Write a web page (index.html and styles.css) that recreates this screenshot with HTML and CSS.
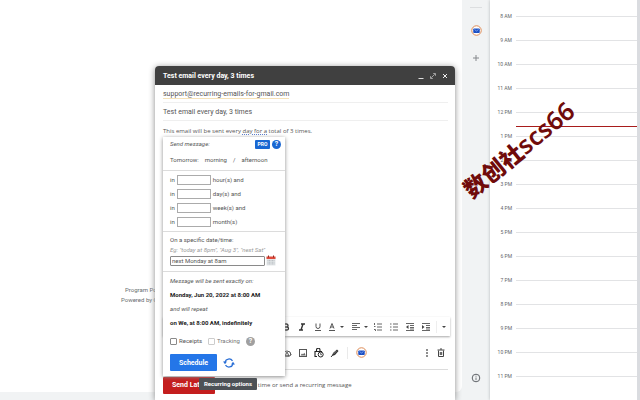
FILE: index.html
```html
<!DOCTYPE html>
<html lang="en">
<head>
<meta charset="utf-8">
<title>Test email every day, 3 times</title>
<link rel="stylesheet" href="styles.css">
</head>
<body>
<div class="app">
  <main class="mail">
    <div class="mail-panel">
      <p class="mail-footer"><a href="#">Program Policies</a><span>Powered by Google</span></p>
    </div>
  </main>

  <nav class="rail" aria-label="Side panel">
    <span class="rail-line"></span>
    <button class="icon-btn rail-mail" aria-label="Recurring emails">
      <svg width="11" height="11" viewBox="0 0 22 22"><circle cx="11" cy="11" r="9.5" fill="#fff" stroke="#dd8a55" stroke-width="2"/><rect x="4.500" y="7" width="13" height="9" rx="1.500" fill="#1c50c4"/><path d="M7 9l4 3 4-3" fill="none" stroke="#8fb1f5" stroke-width="1.500"/></svg>
    </button>
    <button class="icon-btn rail-add" aria-label="Get add-ons">
      <svg width="8" height="8" viewBox="0 0 8 8"><path d="M4 1v6M1 4h6" stroke="#85888c" stroke-width="1"/></svg>
    </button>
    <button class="icon-btn rail-info" aria-label="Information">
      <svg width="10" height="10" viewBox="0 0 10 10"><circle cx="5" cy="5" r="3.800" fill="none" stroke="#5f6368" stroke-width="1"/><path d="M5 4.500v2.700M5 2.700v1" stroke="#777a7e" stroke-width="1"/></svg>
    </button>
  </nav>

  <aside class="calendar" aria-label="Calendar">
    <ol class="hours">
      <li>8 AM</li><li>9 AM</li><li>10 AM</li><li>11 AM</li><li>12 PM</li><li>1 PM</li><li>2 PM</li><li>3 PM</li>
      <li>4 PM</li><li>5 PM</li><li>6 PM</li><li>7 PM</li><li>8 PM</li><li>9 PM</li><li>10 PM</li><li>11 PM</li>
    </ol>
    <span class="now"></span>
  </aside>

  <section class="compose" aria-label="Compose">
    <header class="compose-head">
      <h1>Test email every day, 3 times</h1>
      <button class="icon-btn" aria-label="Minimize"><svg width="8" height="8" viewBox="0 0 8 8"><path d="M1.500 6.500h5" stroke="#ddd"/></svg></button>
      <button class="icon-btn" aria-label="Full screen"><svg width="8" height="8" viewBox="0 0 8 8"><path d="M2.200 5.800l3.600-3.600M4.200 1.500h2.300v2.300M1.500 4.200v2.300h2.300" fill="none" stroke="#bbb" stroke-width=".8"/></svg></button>
      <button class="icon-btn" aria-label="Close"><svg width="8" height="8" viewBox="0 0 8 8"><path d="M2 2l4 4M6 2l-4 4" stroke="#eee"/></svg></button>
    </header>
    <div class="field"><span class="address">support@recurring-emails-for-gmail.com</span></div>
    <div class="field">Test email every day, 3 times</div>
    <div class="message">This email will be sent every <span class="grammar">day for a</span> total of 3 times.</div>

    <div class="format">
      <button class="tool" aria-label="Bold"><svg width="10" height="10" viewBox="0 0 10 10"><path d="M3 2h2.500a1.400 1.400 0 0 1 0 3H3zM3 5h3a1.500 1.500 0 0 1 0 3H3z" fill="none" stroke="#333" stroke-width="1.300"/></svg></button>
      <button class="tool" aria-label="Italic"><svg width="10" height="10" viewBox="0 0 10 10"><path d="M4 2h4M2 8h4M6 2L4 8" stroke="#333" stroke-width="1.400"/></svg></button>
      <button class="tool" aria-label="Underline"><svg width="10" height="10" viewBox="0 0 10 10"><path d="M3 1.500v3a2 2 0 0 0 4 0v-3M2 8.500h6" fill="none" stroke="#555"/></svg></button>
      <button class="tool slim" aria-label="Text color"><svg width="10" height="10" viewBox="0 0 10 10"><path d="M3 6.500l2-5 2 5M3.700 5h2.600M2 8.500h6" fill="none" stroke="#555"/></svg></button>
      <button class="tool caret" aria-label="More colors"></button>
      <button class="tool slim gap" aria-label="Align"><svg width="10" height="10" viewBox="0 0 10 10"><path d="M1 1.500h8M1 3.500h5M1 5.500h8M1 7.500h5" stroke="#666"/></svg></button>
      <button class="tool caret" aria-label="More alignments"></button>
      <button class="tool" aria-label="Numbered list"><svg width="10" height="10" viewBox="0 0 10 10"><path d="M4 2h5M4 5h5M4 8h5M1.500 1v2M1 4.500h1.500M1 7.500h1.500v1.500" fill="none" stroke="#666"/></svg></button>
      <button class="tool" aria-label="Bulleted list"><svg width="10" height="10" viewBox="0 0 10 10"><path d="M4 2h5M4 5h5M4 8h5M1 2h1.500M1 5h1.500M1 8h1.500" stroke="#666"/></svg></button>
      <button class="tool" aria-label="Indent less"><svg width="10" height="10" viewBox="0 0 10 10"><path d="M1 1.500h8M5 3.500h4M5 5.500h4M1 8.500h8M5 7h4" stroke="#666"/><path d="M3.500 3v4L1 5z" fill="#444"/></svg></button>
      <button class="tool" aria-label="Indent more"><svg width="10" height="10" viewBox="0 0 10 10"><path d="M1 1.500h8M5 3.500h4M5 5.500h4M1 8.500h8M5 7h4" stroke="#666"/><path d="M1 3v4l2.500-2z" fill="#444"/></svg></button>
      <button class="tool caret last" aria-label="More formatting"></button>
    </div>

    <div class="actions">
      <button class="tool" aria-label="Insert from Drive"><svg width="10" height="10" viewBox="0 0 10 10"><path d="M1 7a4 4 0 1 1 8 0M3 8l2-4 2 4zM1 6l1 2h6l1-2" fill="none" stroke="#555"/></svg></button>
      <button class="tool" aria-label="Insert photo"><svg width="10" height="10" viewBox="0 0 10 10"><rect x="1.500" y="1.500" width="7" height="7" fill="none" stroke="#555"/><path d="M2.500 7.500L4 5.500l1 1 1.300-1.800 1.500 2.800z" fill="#666"/></svg></button>
      <button class="tool" aria-label="Confidential mode"><svg width="10" height="10" viewBox="0 0 10 10"><path d="M3 8.500H1V3.500h6.500V5M2.500 3.500V2a1.700 1.700 0 0 1 3.500 0v1.500" fill="none" stroke="#222" stroke-width="1.100"/><circle cx="6.700" cy="6.500" r="2.500" fill="#fff" stroke="#222"/><path d="M6.700 5v1.700H8" fill="none" stroke="#222" stroke-width=".7"/></svg></button>
      <button class="tool" aria-label="Insert signature"><svg width="10" height="10" viewBox="0 0 10 10"><path d="M2 8l1-3 4-3.500L8.500 3 5 7z" fill="#333"/><path d="M1 9l3-3.500" stroke="#333"/><path d="M3.500 6l3-3" stroke="#ccc" stroke-width=".5"/></svg></button>
      <span class="split"></span>
      <button class="tool" aria-label="Recurring email"><svg width="11" height="11" viewBox="0 0 22 22"><circle cx="11" cy="11" r="9.500" fill="#fff" stroke="#dd8a55" stroke-width="2"/><rect x="4.500" y="7" width="13" height="9" rx="1.500" fill="#1c50c4"/><path d="M7 9l4 3 4-3" fill="none" stroke="#8fb1f5" stroke-width="1.500"/></svg></button>
      <button class="tool narrow push" aria-label="More options"><svg width="4" height="10" viewBox="0 0 4 10"><path d="M1.200 2h1.600M1.200 5h1.600M1.200 8h1.600" stroke="#444" stroke-width="1.400"/></svg></button>
      <button class="tool narrow" aria-label="Discard draft"><svg width="8" height="10" viewBox="0 0 8 10"><path d="M1.500 2.500v6h5v-6M.5 2h7M3 1h2M3.300 4v3M4.700 4v3" fill="none" stroke="#444"/></svg></button>
    </div>

    <div class="send">
      <button class="send-later">Send Later</button>
      <span class="send-note">at another time or send a recurring message</span>
    </div>

    <form class="menu">
      <div class="menu-part intro">
        <div class="line"><em>Send message:</em><span class="pro">PRO</span><button type="button" class="help" aria-label="Help">?</button></div>
        <div class="line quick">Tomorrow: <a href="#">morning</a> / <a href="#">afternoon</a></div>
      </div>
      <div class="menu-part delays">
        <div class="delay"><label for="hours">in</label><input id="hours" type="text"><span>hour(s) and</span></div>
        <div class="delay"><label for="days">in</label><input id="days" type="text"><span>day(s) and</span></div>
        <div class="delay"><label for="weeks">in</label><input id="weeks" type="text"><span>week(s) and</span></div>
        <div class="delay"><label for="months">in</label><input id="months" type="text"><span>month(s)</span></div>
      </div>
      <div class="menu-part exact">
        <label for="when">On a specific date/time:</label>
        <em class="hint">Eg: "today at 8pm", "Aug 3", "next Sat"</em>
        <div class="pick"><input id="when" type="text" value="next Monday at 8am">
          <button type="button" class="icon-btn" aria-label="Pick a date"><svg width="10" height="11" viewBox="0 0 10 11"><path d="M.5 2h9v8.500h-9z" fill="#e3e6e8"/><path d="M.5 1.500h9V4h-9z" fill="#df4b3c"/><path d="M2.500.5v2M7.500.5v2" stroke="#8e2a22"/><path d="M1.500 5.500h7M1.500 7.200h7M1.500 8.900h7" stroke="#b0b5ba" stroke-width=".8" stroke-dasharray="1 .5"/></svg></button>
        </div>
      </div>
      <div class="menu-part result">
        <p><em>Message will be sent exactly on:</em></p>
        <p><strong>Monday, Jun 20, 2022 at 8:00 AM</strong></p>
        <p><em>and will repeat</em></p>
        <p><strong>on We, at 8:00 AM, indefinitely</strong></p>
        <div class="checks">
          <label><input type="checkbox">Receipts</label>
          <label class="off"><input type="checkbox" disabled>Tracking</label>
          <button type="button" class="help muted" aria-label="About tracking">?</button>
        </div>
        <div class="submit">
          <button type="button" class="schedule">Schedule</button>
          <button type="button" class="icon-btn" aria-label="Recurring options"><svg width="12" height="12" viewBox="0 0 12 12"><path d="M2 5a4.200 4.200 0 0 1 7.500-1.200M10 7a4.200 4.200 0 0 1-7.500 1.200" fill="none" stroke="#2a6fd6" stroke-width="1.300"/><path d="M0 4.500h4L2 7.200zM8 7.500h4L10 4.800z" fill="#2a6fd6"/></svg></button>
        </div>
      </div>
      <span class="tip" role="tooltip">Recurring options</span>
    </form>
  </section>

  <div class="stamp"><span class="stamp-cjk" lang="zh">数创社</span>scs66</div>
</div>
</body>
</html>
```
FILE: styles.css
```css
* { box-sizing: border-box; }

body {
  margin: 0;
  font: 6px/10px Roboto, "Liberation Sans", sans-serif;
  color: #555;
  background: #f1f3f4;
}

button, input {
  margin: 0;
  padding: 0;
  font: inherit;
  color: inherit;
}

button { border: 0; background: none; }
a { color: inherit; text-decoration: none; }
svg { display: block; }
h1, p, ol { margin: 0; padding: 0; }

.app {
  position: relative;
  display: flex;
  height: 100vh;
  overflow: hidden;
}

/* Mail list behind the compose window */
.mail { flex: 1; padding-bottom: 8px; }

.mail-panel {
  height: 100%;
  padding: 285px 0 0 121px;
  background: #fff;
  border-radius: 0 0 6px 0;
}

.mail-footer {
  display: flex;
  flex-direction: column;
  color: #6a6d70;
}

.mail-footer a { padding-left: 4px; }

/* Side rail */
.rail {
  display: flex;
  flex-direction: column;
  align-items: center;
  width: 28px;
  padding: 7px 0 17px;
}

.rail-line { width: 12px; height: 1px; background: #dcdee0; }
.rail-mail { margin-top: 17px; }
.rail-add { margin-top: 18px; }
.rail-info { margin-top: auto; }

.icon-btn { display: grid; place-items: center; }

/* Calendar */
.calendar {
  position: relative;
  width: 150px;
  padding-top: 11px;
  background: #fff;
  border-right: 3px solid #dadce0;
  box-shadow: 0 0 3px #b4b7ba;
}

.hours { list-style: none; }

.hours li {
  display: grid;
  grid-template-columns: 15px 1fr;
  gap: 4px;
  align-items: center;
  height: 10px;
  margin-bottom: 14px;
  padding-left: 7px;
  font-size: 5px;
  text-align: right;
  color: #63666a;
}

.hours li::after { content: ""; height: 1px; background: #e2e3e5; }

.now {
  position: absolute;
  top: 126px;
  left: 26px;
  right: 0;
  height: 1px;
  background: #a81c1c;
}

/* Compose window */
.compose {
  position: absolute;
  top: 66px;
  right: 185px;
  bottom: 0;
  width: 300px;
  display: flex;
  flex-direction: column;
  background: #fff;
  border-radius: 4px 4px 0 0;
  box-shadow: 0 1px 6px #8a8a8a;
}

.compose-head {
  display: flex;
  align-items: center;
  gap: 4px;
  height: 19px;
  padding: 0 6px 0 8px;
  background: #404040;
  border-radius: 4px 4px 0 0;
}

.compose-head h1 {
  flex: 1;
  font-size: 7px;
  font-weight: 700;
  color: #fff;
}

.field {
  height: 18px;
  margin: 0 7px 0 8px;
  font-size: 7px;
  line-height: 18px;
  border-bottom: 1px solid #efefef;
}

.address { border-bottom: 1px solid #f6e2b8; }

.message {
  flex: 1;
  padding: 5px 8px;
}

.message, .send-note { font-family: "Open Sans", Roboto, sans-serif; }

.grammar { text-decoration: underline dotted #5b7fd0; }

.format {
  display: flex;
  justify-content: flex-end;
  align-items: center;
  height: 19px;
  margin: 0 5px 0 8px;
  background: #fff;
  box-shadow: 0 1px 2px #a8a8a8;
}

.tool {
  display: grid;
  place-items: center;
  flex: none;
  width: 16px;
  height: 12px;
}

.slim { width: 12px; }
.narrow { width: 14px; }
.gap { margin-left: 4px; }

.caret { width: 8px; }
.caret::before {
  content: "";
  border: 2px solid transparent;
  border-top-color: #444;
  border-bottom-width: 0;
}

.caret.last { width: 14px; margin-left: 2px; border-left: 1px solid #eee; }

.actions {
  display: flex;
  align-items: center;
  height: 34px;
  margin: 0 7px 0 8px;
  padding-left: 116px;
  border-bottom: 1px solid #dcdcdc;
}

.split { width: 1px; height: 12px; margin: 0 5px 0 4px; background: #eaeaea; }
.push { margin-left: auto; }

.send {
  display: flex;
  align-items: center;
  gap: 12px;
  height: 30px;
  padding: 0 8px;
}

.send-later {
  width: 52px;
  height: 17px;
  font-size: 7px;
  font-weight: 700;
  color: #fff;
  background: #c41e1e;
  border-radius: 1px;
}

/* Scheduling menu */
.menu {
  position: absolute;
  top: 71px;
  left: 8px;
  width: 122px;
  background: #fff;
  box-shadow: 0 1px 4px #8c8c8c;
}

.menu-part { padding: 2px 7px; border-bottom: 1px solid #dcdcdc; }
.menu-part:last-of-type { border-bottom: 0; }

.line { display: flex; align-items: center; height: 10px; }
.line em { flex: 1; }

.intro { padding-bottom: 5px; }
.quick { gap: 6px; margin-top: 6px; }

.pro {
  width: 15px;
  height: 9px;
  font-size: 5px;
  font-weight: 700;
  line-height: 9px;
  text-align: center;
  color: #fff;
  background: #1967d2;
  border-radius: 1px;
}

.help {
  width: 9px;
  height: 9px;
  margin-left: 2px;
  font-size: 7px;
  font-weight: 700;
  line-height: 9px;
  text-align: center;
  color: #fff;
  background: #1967d2;
  border-radius: 50%;
}

.intro .help { margin-right: -3px; }
.help.muted { background: #a0a0a0; }

.delay { display: flex; align-items: center; gap: 2px; height: 14px; }

.menu input[type="text"] {
  width: 34px;
  height: 10px;
  border: 1px solid #ababab;
  background: #fff;
}

.exact { padding: 3px 7px 5px; }
.exact label, .hint { display: block; height: 10px; }
.hint { color: #999; }
.pick { display: flex; align-items: center; gap: 1px; height: 11px; }
.menu .pick input { width: 95px; padding-left: 1px; border-color: #8a8a8a; border-radius: 1px; }

.result { padding-bottom: 5px; }
.result p { line-height: 14px; white-space: nowrap; }
.result strong { color: #222; }

.checks { display: flex; align-items: center; gap: 4px; height: 14px; margin-top: 4px; }
.checks label { display: flex; align-items: center; gap: 2px; }
.checks input {
  appearance: none;
  width: 7px;
  height: 7px;
  border: 1px solid #8a8a8a;
  border-radius: 1px;
}
.checks .off { margin-left: 2px; color: #777; }
.checks .off input { border-color: #ccc; }

.submit { display: flex; align-items: center; gap: 6px; margin-top: 6px; }

.schedule {
  width: 47px;
  height: 17px;
  font-size: 7px;
  font-weight: 700;
  color: #fff;
  background: #2476e8;
  border-radius: 1px;
}

.tip {
  position: absolute;
  top: 241px;
  left: 36px;
  padding: 1px 5px;
  font-weight: 700;
  white-space: nowrap;
  color: #fff;
  background: #4d5156;
  border-radius: 1px;
}

/* Diagonal watermark */
.stamp {
  position: absolute;
  top: 149px;
  left: 518px;
  display: flex;
  align-items: center;
  width: max-content;
  font: 600 25px/24px "Noto Sans", sans-serif;
  white-space: nowrap;
  color: #700b0b;
  transform: translate(-50%, -50%) rotate(-39deg);
}

.stamp-cjk { font: 900 23px/24px "Noto Sans CJK SC", sans-serif; }
```
